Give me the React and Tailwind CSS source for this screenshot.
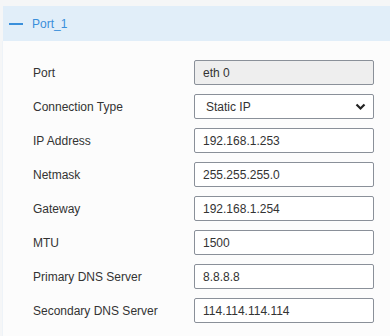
import React from "react";

const rows = [
  { label: "Port", value: "eth 0", disabled: true },
  { label: "Connection Type", value: "Static IP", select: true },
  { label: "IP Address", value: "192.168.1.253" },
  { label: "Netmask", value: "255.255.255.0" },
  { label: "Gateway", value: "192.168.1.254" },
  { label: "MTU", value: "1500" },
  { label: "Primary DNS Server", value: "8.8.8.8" },
  { label: "Secondary DNS Server", value: "114.114.114.114" },
];

export default function App() {
  return (
    <div
      className="w-[390px] h-[336px] bg-[#f5f6f7] pt-[6px] pl-[3px] overflow-hidden text-[12px] text-[#333]"
      style={{ fontFamily: '"Liberation Sans", Arial, sans-serif' }}
    >
      <div className="h-[35px] bg-[#e1eef9] flex items-center pl-[6px]">
        <div className="w-[14px] h-[2px] bg-[#3a8fdb]" />
        <span className="ml-[9px] text-[#3a8fdb] text-[12px]">Port_1</span>
      </div>
      <div className="bg-[#fcfcfc] h-[300px] pl-[30px] pt-[19px] border-l border-[#eef3f8] -ml-px">
        {rows.map((r) => (
          <div key={r.label} className="flex items-center h-[25px] mb-[9px]">
            <div className="w-[161px] shrink-0">{r.label}</div>
            <div
              className={`w-[180px] h-[25px] border border-[#8a9099] rounded-[2px] flex items-center ${
                r.disabled ? "bg-[#eeeeee] pl-[8px]" : r.select ? "bg-white pl-[11px] pr-[7px] justify-between" : "bg-white pl-[8px]"
              }`}
            >
              <span>{r.value}</span>
              {r.select && (
                <svg width="11" height="8" viewBox="0 0 11 8">
                  <path d="M1.5 1.5 L5.5 5.5 L9.5 1.5" fill="none" stroke="#222" strokeWidth="2.2" />
                </svg>
              )}
            </div>
          </div>
        ))}
      </div>
    </div>
  );
}
